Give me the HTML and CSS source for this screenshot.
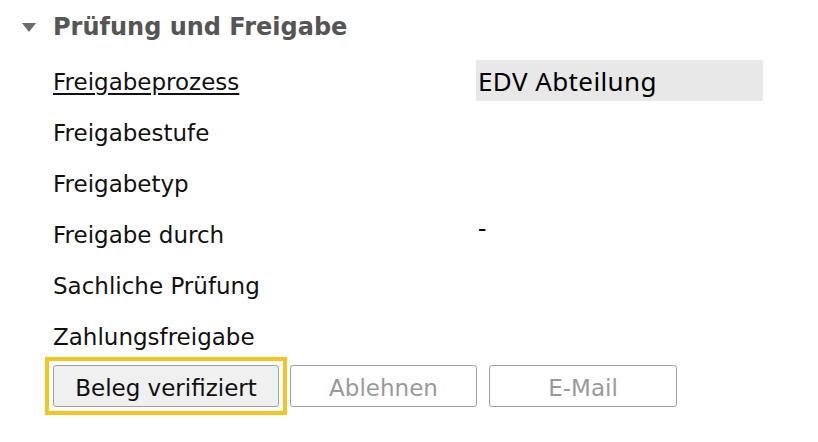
FILE: index.html
```html
<!DOCTYPE html>
<html lang="de">
<head>
<meta charset="utf-8">
<link rel="stylesheet" href="styles.css">
</head>
<body>
<section class="panel">
  <header class="panel-head">
    <svg class="caret" width="14" height="9" viewBox="0 0 14 9"><polygon points="0,0 14,0 7,9" fill="#6b6b6b"/></svg>
    <h2 class="title">Prüfung und Freigabe</h2>
  </header>
  <div class="fields">
    <div class="label"><a class="link" href="#">Freigabeprozess</a></div>
    <div class="value boxed">EDV Abteilung</div>
    <div class="label">Freigabestufe</div>
    <div class="value"></div>
    <div class="label">Freigabetyp</div>
    <div class="value"></div>
    <div class="label">Freigabe durch</div>
    <div class="value dash">-</div>
    <div class="label">Sachliche Prüfung</div>
    <div class="value"></div>
    <div class="label">Zahlungsfreigabe</div>
    <div class="value"></div>
  </div>
  <div class="actions">
    <div class="focus-ring"><button class="btn btn-primary">Beleg verifiziert</button></div>
    <button class="btn btn-disabled btn-reject">Ablehnen</button>
    <button class="btn btn-disabled btn-mail">E-Mail</button>
  </div>
</section>
</body>
</html>
```
FILE: styles.css
```css
html, body {
  margin: 0;
  padding: 0;
  background: #ffffff;
}
body {
  font-family: "DejaVu Sans", sans-serif;
  color: #111111;
}
.panel {
  width: 818px;
  height: 441px;
  padding-top: 1px;
}
.panel-head {
  display: flex;
  align-items: center;
  height: 52px;
  margin-bottom: 7px;
}
.caret {
  margin-left: 22px;
  margin-right: 17px;
}
.title {
  margin: 0;
  font-size: 24px;
  font-weight: bold;
  color: #555555;
}
.fields {
  display: grid;
  grid-template-columns: 423px 287px;
  grid-auto-rows: 41px;
  row-gap: 10px;
  margin-left: 53px;
}
.label, .value {
  display: flex;
  align-items: center;
  font-size: 23px;
}
.label {
  padding-top: 2px;
}
.link {
  color: #111111;
  text-decoration: underline;
  text-underline-offset: 3px;
}
.value {
  padding-left: 2px;
  font-family: "Noto Sans", "Open Sans", sans-serif;
  font-size: 26px;
  letter-spacing: 0.4px;
  color: #000000;
}
.dash {
  padding-bottom: 14px;
}
.boxed {
  background: #e8e8e8;
}
.actions {
  display: flex;
  align-items: center;
  margin-left: 45px;
  margin-top: 1px;
}
.focus-ring {
  border: 4px solid #f6c420;
  padding: 4px;
  margin-right: 3px;
}
.btn {
  height: 42px;
  font-family: inherit;
  font-size: 23px;
  border: 1px solid #a0a0a0;
  border-radius: 3px;
  padding: 3px 0 0;
  display: block;
}
.btn-primary {
  width: 226px;
  background: #f0f0f0;
  color: #111111;
}
.btn-disabled {
  background: #ffffff;
  color: #9a9a9a;
}
.btn-reject {
  width: 187px;
}
.btn-mail {
  width: 188px;
  margin-left: 12px;
}
```
